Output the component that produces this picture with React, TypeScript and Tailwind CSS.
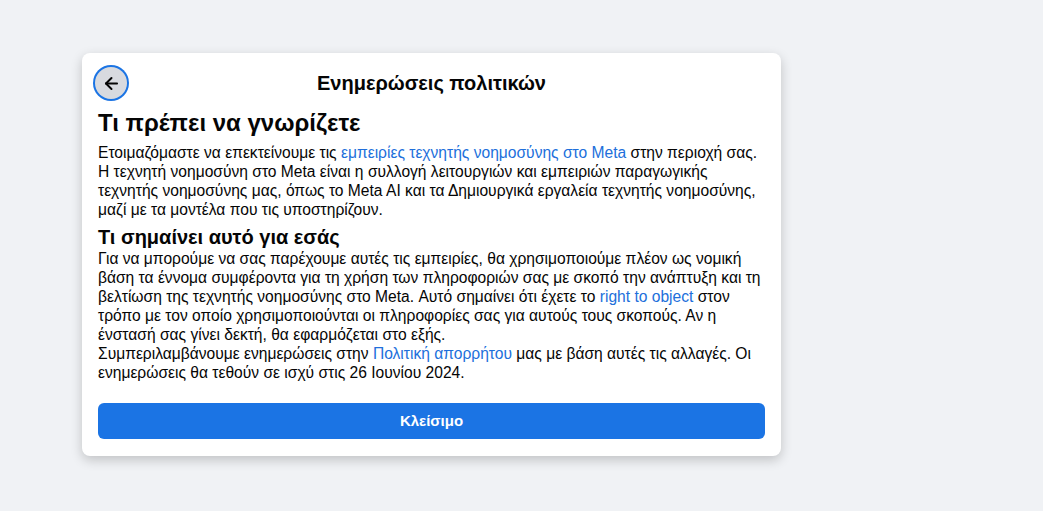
import { ArrowLeft } from 'lucide-react'

export default function App() {
  return (
    <div
      className="min-h-[511px] w-full bg-[#f0f2f5] pt-[53px] pl-[82px]"
      style={{ fontFamily: '"Liberation Sans", Arial, sans-serif' }}
    >
      <div className="w-[699px] rounded-lg bg-white px-4 pb-[17px] pt-[14px] shadow-[0_4px_12px_rgba(0,0,0,0.2)]">
        {/* Header */}
        <div className="relative flex h-8 items-center justify-center">
          <button className="absolute left-[-3px] top-0 flex h-8 w-8 items-center justify-center rounded-full bg-[#d8dadf] ring-2 ring-[#1b74e4]">
            <ArrowLeft size={19} strokeWidth={2.5} className="text-[#050505]" />
          </button>
          <h1 className="text-[20px] font-bold text-[#050505]">Ενημερώσεις πολιτικών</h1>
        </div>

        <h2 className="mt-[9px] text-[24px] font-bold leading-[30px] text-[#050505]">
          Τι πρέπει να γνωρίζετε
        </h2>
        <p className="mt-[5px] whitespace-nowrap text-[15.6px] leading-[19px] text-[#050505]">
          Ετοιμαζόμαστε να επεκτείνουμε τις{' '}
          <a className="text-[#216fdb]">εμπειρίες τεχνητής νοημοσύνης στο Meta</a> στην περιοχή σας.
          <br />
          Η τεχνητή νοημοσύνη στο Meta είναι η συλλογή λειτουργιών και εμπειριών παραγωγικής
          <br />
          τεχνητής νοημοσύνης μας, όπως το Meta AI και τα Δημιουργικά εργαλεία τεχνητής νοημοσύνης,
          <br />
          μαζί με τα μοντέλα που τις υποστηρίζουν.
        </p>

        <h3 className="mt-[6px] text-[20px] font-bold leading-[24px] text-[#050505]">
          Τι σημαίνει αυτό για εσάς
        </h3>
        <p className="whitespace-nowrap text-[15.6px] leading-[19px] text-[#050505]">
          Για να μπορούμε να σας παρέχουμε αυτές τις εμπειρίες, θα χρησιμοποιούμε πλέον ως νομική
          <br />
          βάση τα έννομα συμφέροντα για τη χρήση των πληροφοριών σας με σκοπό την ανάπτυξη και τη
          <br />
          βελτίωση της τεχνητής νοημοσύνης στο Meta. Αυτό σημαίνει ότι έχετε το{' '}
          <a className="text-[#216fdb]">right to object</a> στον
          <br />
          τρόπο με τον οποίο χρησιμοποιούνται οι πληροφορίες σας για αυτούς τους σκοπούς. Αν η
          <br />
          ένστασή σας γίνει δεκτή, θα εφαρμόζεται στο εξής.
          <br />
          Συμπεριλαμβάνουμε ενημερώσεις στην{' '}
          <a className="text-[#216fdb]">Πολιτική απορρήτου</a> μας με βάση αυτές τις αλλαγές. Οι
          <br />
          ενημερώσεις θα τεθούν σε ισχύ στις 26 Ιουνίου 2024.
        </p>

        <button className="mt-[21px] flex h-9 w-full items-center justify-center rounded-md bg-[#1b74e4] text-[15px] font-semibold text-white">
          Κλείσιμο
        </button>
      </div>
    </div>
  )
}
